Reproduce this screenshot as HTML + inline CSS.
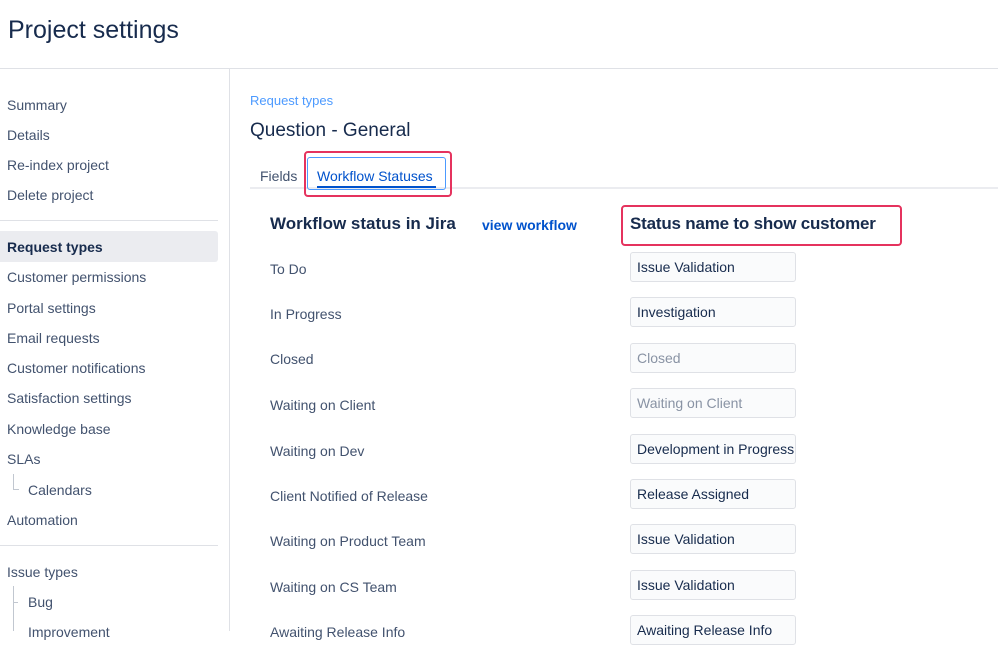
<!DOCTYPE html>
<html><head><style>
body{margin:0;width:998px;height:631px;overflow:hidden;background:#fff;font-family:"Liberation Sans",sans-serif;color:#172b4d;position:relative}
.a{position:absolute;white-space:nowrap}
.sb{font-size:14px;color:#42526e;left:7px}
.lbl{font-size:14px;color:#42526e;left:270px}
.in{position:absolute;left:630px;border:1px solid #dfe1e6;border-radius:3px;background:#fafbfc;font-size:14px;line-height:28px;padding-left:6px;box-sizing:border-box;width:166px;height:30px;color:#172b4d;overflow:hidden;white-space:nowrap}
.ph{color:#8993a4}
</style></head><body>
<div class="a" style="left:8px;top:16px;font-size:25px;color:#172b4d">Project settings</div>
<div class="a" style="left:0;top:68px;width:998px;height:1px;background:#dfe1e6"></div>
<div class="a" style="left:229px;top:69px;width:1px;height:562px;background:#dfe1e6"></div>
<div class="a" style="left:0;top:231px;width:218px;height:31px;background:#ebecf0;border-radius:0 3px 3px 0"></div>
<div class="a" style="left:0;top:220px;width:218px;height:1px;background:#dfe1e6"></div>
<div class="a" style="left:0;top:545px;width:218px;height:1px;background:#dfe1e6"></div>
<div class="a sb" style="top:97px">Summary</div>
<div class="a sb" style="top:127px">Details</div>
<div class="a sb" style="top:157px">Re-index project</div>
<div class="a sb" style="top:187px">Delete project</div>
<div class="a sb" style="top:239px;color:#172b4d;font-weight:bold">Request types</div>
<div class="a sb" style="top:269px">Customer permissions</div>
<div class="a sb" style="top:300px">Portal settings</div>
<div class="a sb" style="top:330px">Email requests</div>
<div class="a sb" style="top:360px">Customer notifications</div>
<div class="a sb" style="top:390px">Satisfaction settings</div>
<div class="a sb" style="top:421px">Knowledge base</div>
<div class="a sb" style="top:451px">SLAs</div>
<div class="a" style="left:13px;top:474px;width:1px;height:15px;background:#c1c7d0"></div>
<div class="a" style="left:13px;top:489px;width:6px;height:1px;background:#c1c7d0"></div>
<div class="a sb" style="top:482px;left:28px">Calendars</div>
<div class="a sb" style="top:512px">Automation</div>
<div class="a sb" style="top:564px">Issue types</div>
<div class="a" style="left:13px;top:586px;width:1px;height:45px;background:#c1c7d0"></div>
<div class="a" style="left:13px;top:602px;width:5px;height:1px;background:#c1c7d0"></div>
<div class="a sb" style="top:594px;left:28px">Bug</div>
<div class="a sb" style="top:624px;left:28px">Improvement</div>

<div class="a" style="left:250px;top:93px;font-size:13px;color:#4c9aff">Request types</div>
<div class="a" style="left:250px;top:120px;font-size:19px;color:#172b4d">Question - General</div>
<div class="a" style="left:250px;top:187px;width:748px;height:2px;background:#ebecf0"></div>
<div class="a" style="left:260px;top:168px;font-size:14px;color:#42526e">Fields</div>
<div class="a" style="left:304px;top:151px;width:148px;height:46px;border:2px solid #e5335e;border-radius:4px;box-sizing:border-box"></div>
<div class="a" style="left:307px;top:157px;width:139px;height:33px;border:1px solid #4c9aff;border-radius:3px;box-sizing:border-box"></div>
<div class="a" style="left:317px;top:168px;font-size:14px;color:#0052cc">Workflow Statuses</div>
<div class="a" style="left:317px;top:186px;width:119px;height:2px;background:#0052cc"></div>
<div class="a" style="left:270px;top:214px;font-size:17px;font-weight:bold;color:#172b4d">Workflow status in Jira</div>
<div class="a" style="left:482px;top:217px;font-size:14px;font-weight:bold;color:#0052cc">view workflow</div>
<div class="a" style="left:621px;top:205px;width:281px;height:41px;border:2px solid #e5335e;border-radius:4px;box-sizing:border-box"></div>
<div class="a" style="left:630px;top:214px;font-size:17px;font-weight:bold;color:#172b4d;letter-spacing:-0.2px">Status name to show customer</div>

<div class="a lbl" style="top:261px">To Do</div><div class="in" style="top:252px">Issue Validation</div>
<div class="a lbl" style="top:306px">In Progress</div><div class="in" style="top:297px">Investigation</div>
<div class="a lbl" style="top:351px">Closed</div><div class="in ph" style="top:343px">Closed</div>
<div class="a lbl" style="top:397px">Waiting on Client</div><div class="in ph" style="top:388px">Waiting on Client</div>
<div class="a lbl" style="top:443px">Waiting on Dev</div><div class="in" style="top:434px">Development in Progress</div>
<div class="a lbl" style="top:488px">Client Notified of Release</div><div class="in" style="top:479px">Release Assigned</div>
<div class="a lbl" style="top:533px">Waiting on Product Team</div><div class="in" style="top:524px">Issue Validation</div>
<div class="a lbl" style="top:579px">Waiting on CS Team</div><div class="in" style="top:570px">Issue Validation</div>
<div class="a lbl" style="top:624px">Awaiting Release Info</div><div class="in" style="top:615px">Awaiting Release Info</div>
</body></html>
